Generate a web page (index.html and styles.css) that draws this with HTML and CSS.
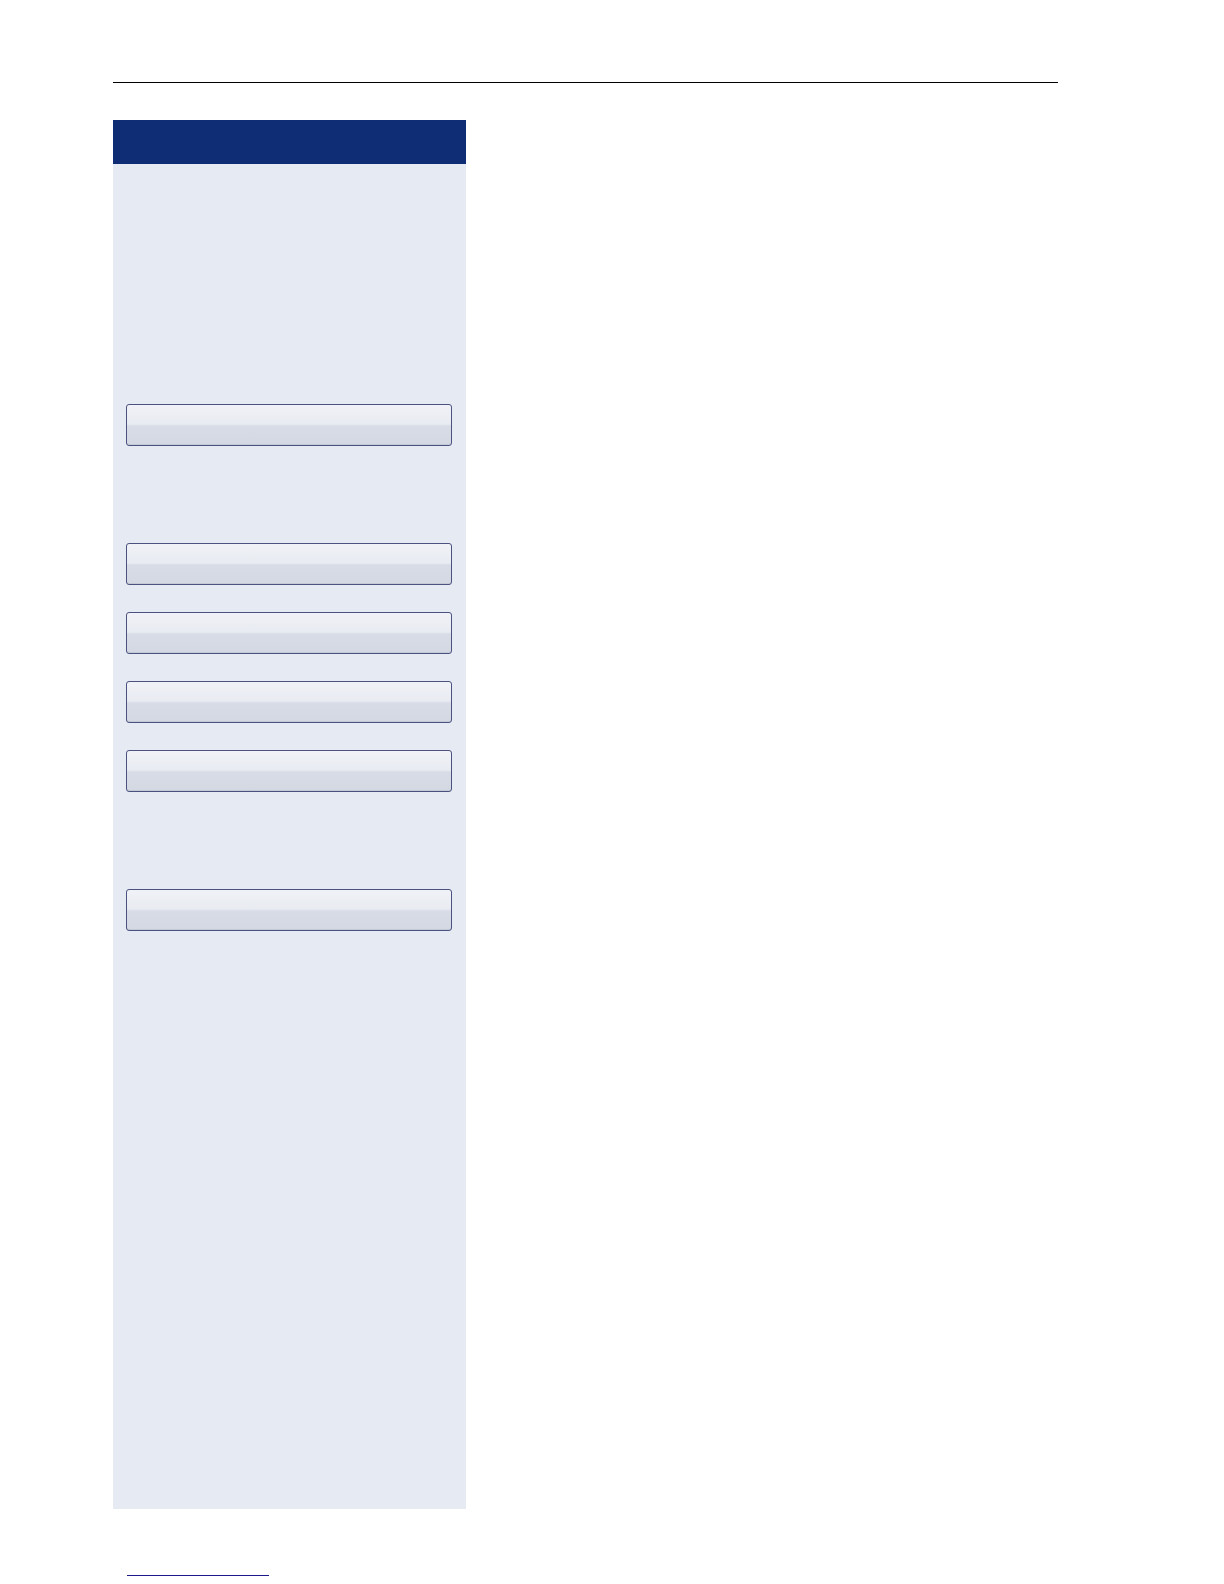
FILE: index.html
```html
<!DOCTYPE html>
<html>
<head>
<meta charset="utf-8">
<link rel="stylesheet" href="styles.css">
</head>
<body>
<div class="page">
  <div class="rule"></div>
  <div class="sidebar">
    <div class="sidebar-head"></div>
    <div class="sidebar-body">
      <div class="btn first"></div>
      <div class="btn gap-large"></div>
      <div class="btn"></div>
      <div class="btn"></div>
      <div class="btn"></div>
      <div class="btn gap-large"></div>
    </div>
  </div>
  <div class="footer-link"></div>
</div>
</body>
</html>
```
FILE: styles.css
```css
html, body {
  margin: 0;
  padding: 0;
  background: #ffffff;
  font-family: "Liberation Sans", Arial, sans-serif;
}
.page {
  width: 1224px;
  height: 1584px;
  padding-top: 82px;
  box-sizing: border-box;
  padding-left: 113px;
}
.rule {
  width: 945px;
  height: 0;
  border-top: 1px solid #000000;
}
.sidebar {
  margin-top: 37px;
  width: 353px;
  height: 1389px;
  background: #e6eaf2;
  display: flex;
  flex-direction: column;
}
.sidebar-head {
  height: 44px;
  background: #0f2d75;
}
.sidebar-body {
  display: flex;
  flex-direction: column;
  padding-left: 13px;
  padding-right: 14px;
}
.btn {
  height: 40px;
  margin-top: 27px;
  border: 1px solid #4b5280;
  border-radius: 3px;
  background: linear-gradient(to bottom, #f0f2f7 0%, #e8ebf1 48%, #d8dce6 52%, #d4d8e2 100%);
  box-shadow: inset 0 -1px 0 #c4c9d6;
}
.btn.first {
  margin-top: 240px;
}
.btn.gap-large {
  margin-top: 97px;
}
.footer-link {
  margin-top: 66px;
  margin-left: 14px;
  width: 142px;
  height: 0;
  border-top: 1px solid #1a1a8c;
}
```
